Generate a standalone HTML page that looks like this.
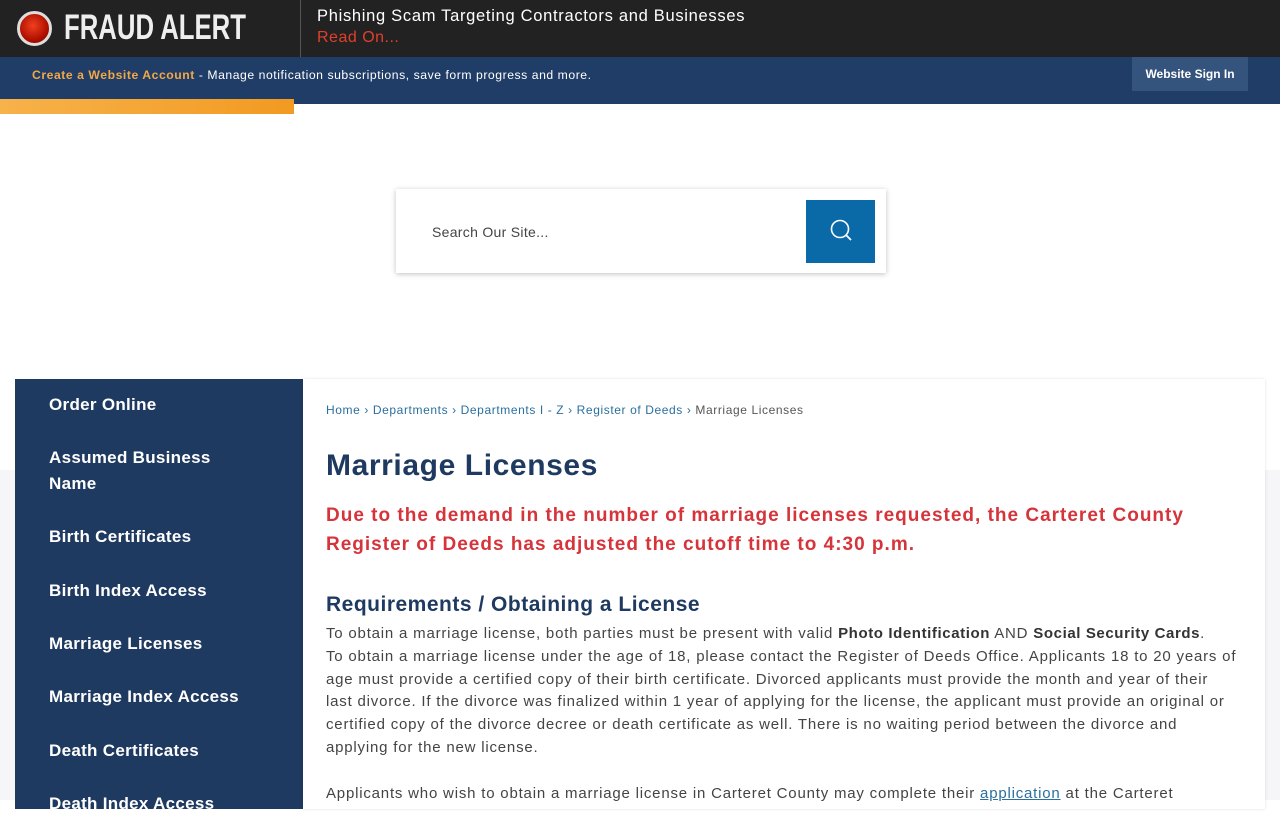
<!DOCTYPE html>
<html><head><meta charset="utf-8"><style>
*{margin:0;padding:0;box-sizing:border-box}
body{width:1280px;height:800px;overflow:hidden;background:#fff;font-family:"Liberation Sans",sans-serif;position:relative}
.top{position:absolute;left:0;top:0;width:1280px;height:57px;background:#222}
.fa{position:absolute;left:64px;top:8px;color:#eee;font-size:35px;font-weight:bold;transform:scaleX(.735);transform-origin:left}
.dot{position:absolute;left:17px;top:11px;width:35px;height:35px;border-radius:50%;background:radial-gradient(circle at 45% 40%,#f04020,#b01000 60%,#700);border:3px solid #ddd}
.sep{position:absolute;left:300px;top:0;width:1px;height:57px;background:#555}
.ph{position:absolute;left:317px;top:7px;color:#fff;font-size:16.5px;letter-spacing:.7px}
.ro{position:absolute;left:317px;top:29px;color:#e0402a;font-size:16px;letter-spacing:.5px}
.bar{position:absolute;left:0;top:57px;width:1280px;height:47px;background:#1f3d66}
.bar .t{position:absolute;left:32px;top:11px;font-size:12.2px;color:#fff;letter-spacing:.55px}
.bar b{color:#f2a846}
.sign{position:absolute;left:1132px;top:0;width:116px;height:34px;background:#34547e;color:#fff;font-size:12px;font-weight:bold;text-align:center;line-height:34px}
.or{position:absolute;left:0;top:99px;width:294px;height:15px;background:linear-gradient(90deg,#f7b24a,#f29a22);}
.sb{position:absolute;left:396px;top:189px;width:490px;height:84px;background:#fff;box-shadow:0 1px 5px rgba(0,0,0,.25)}
.sb span{position:absolute;left:36px;top:35px;font-size:14px;color:#444;letter-spacing:.3px}
.sbtn{position:absolute;left:410px;top:11px;width:69px;height:63px;background:#0a6aa8}
.gray{position:absolute;left:0;top:470px;width:1280px;height:330px;background:#f6f6f8}
.side{position:absolute;left:15px;top:379px;width:288px;height:430px;background:#1f3a61}
.side div{position:absolute;left:34px;color:#fff;font-size:17px;line-height:26px;font-weight:bold;letter-spacing:.3px}
.main{position:absolute;left:303px;top:379px;width:962px;height:430px;background:#fff;box-shadow:0 0 3px rgba(0,0,0,.12)}
.bc{position:absolute;left:23px;top:24px;font-size:12px;color:#2a6f9e;letter-spacing:.6px}
.bc i{font-style:normal;color:#555}
h1{position:absolute;left:23px;top:70px;font-size:30px;color:#1f3a61;font-weight:bold;letter-spacing:.6px}
.red{position:absolute;left:23px;top:122px;font-size:19px;color:#d6343b;font-weight:bold;line-height:29px;letter-spacing:1px}
h2{position:absolute;left:23px;top:214px;font-size:21px;color:#1f3a61;letter-spacing:.5px}
.p{position:absolute;left:23px;top:244px;font-size:15px;color:#444;line-height:22.8px;white-space:nowrap;letter-spacing:.8px}
.p b{color:#333;letter-spacing:.6px}
a{color:#2a6f9e;text-decoration:underline}
</style></head><body>
<div class="top"><div class="dot"></div><div class="fa">FRAUD ALERT</div><div class="sep"></div>
<div class="ph">Phishing Scam Targeting Contractors and Businesses</div><div class="ro">Read On...</div></div>
<div class="bar"><div class="t"><b>Create a Website Account</b> - Manage notification subscriptions, save form progress and more.</div><div class="sign">Website Sign In</div></div>
<div class="or"></div>
<div class="sb"><span>Search Our Site...</span><div class="sbtn"><svg width="69" height="63" viewBox="0 0 69 63"><circle cx="34" cy="29" r="8.5" fill="none" stroke="#fff" stroke-width="1.6"/><path d="M40 35l5 5" stroke="#fff" stroke-width="1.8"/></svg></div></div>
<div class="gray"></div>
<div class="side">
<div style="top:13px">Order Online</div>
<div style="top:66px">Assumed Business<br>Name</div>
<div style="top:145px">Birth Certificates</div>
<div style="top:199px">Birth Index Access</div>
<div style="top:252px">Marriage Licenses</div>
<div style="top:305px">Marriage Index Access</div>
<div style="top:359px">Death Certificates</div>
<div style="top:412px">Death Index Access</div>
</div>
<div class="main">
<div class="bc">Home › Departments › Departments I - Z › Register of Deeds › <i>Marriage Licenses</i></div>
<h1>Marriage Licenses</h1>
<div class="red">Due to the demand in the number of marriage licenses requested, the Carteret County<br>Register of Deeds has adjusted the cutoff time to 4:30 p.m.</div>
<h2>Requirements / Obtaining a License</h2>
<div class="p">To obtain a marriage license, both parties must be present with valid <b>Photo Identification</b> AND <b>Social Security Cards</b>.<br>To obtain a marriage license under the age of 18, please contact the Register of Deeds Office. Applicants 18 to 20 years of<br>age must provide a certified copy of their birth certificate. Divorced applicants must provide the month and year of their<br>last divorce. If the divorce was finalized within 1 year of applying for the license, the applicant must provide an original or<br>certified copy of the divorce decree or death certificate as well. There is no waiting period between the divorce and<br>applying for the new license.<br><br>Applicants who wish to obtain a marriage license in Carteret County may complete their <a>application</a> at the Carteret</div>
</div>
</body></html>
